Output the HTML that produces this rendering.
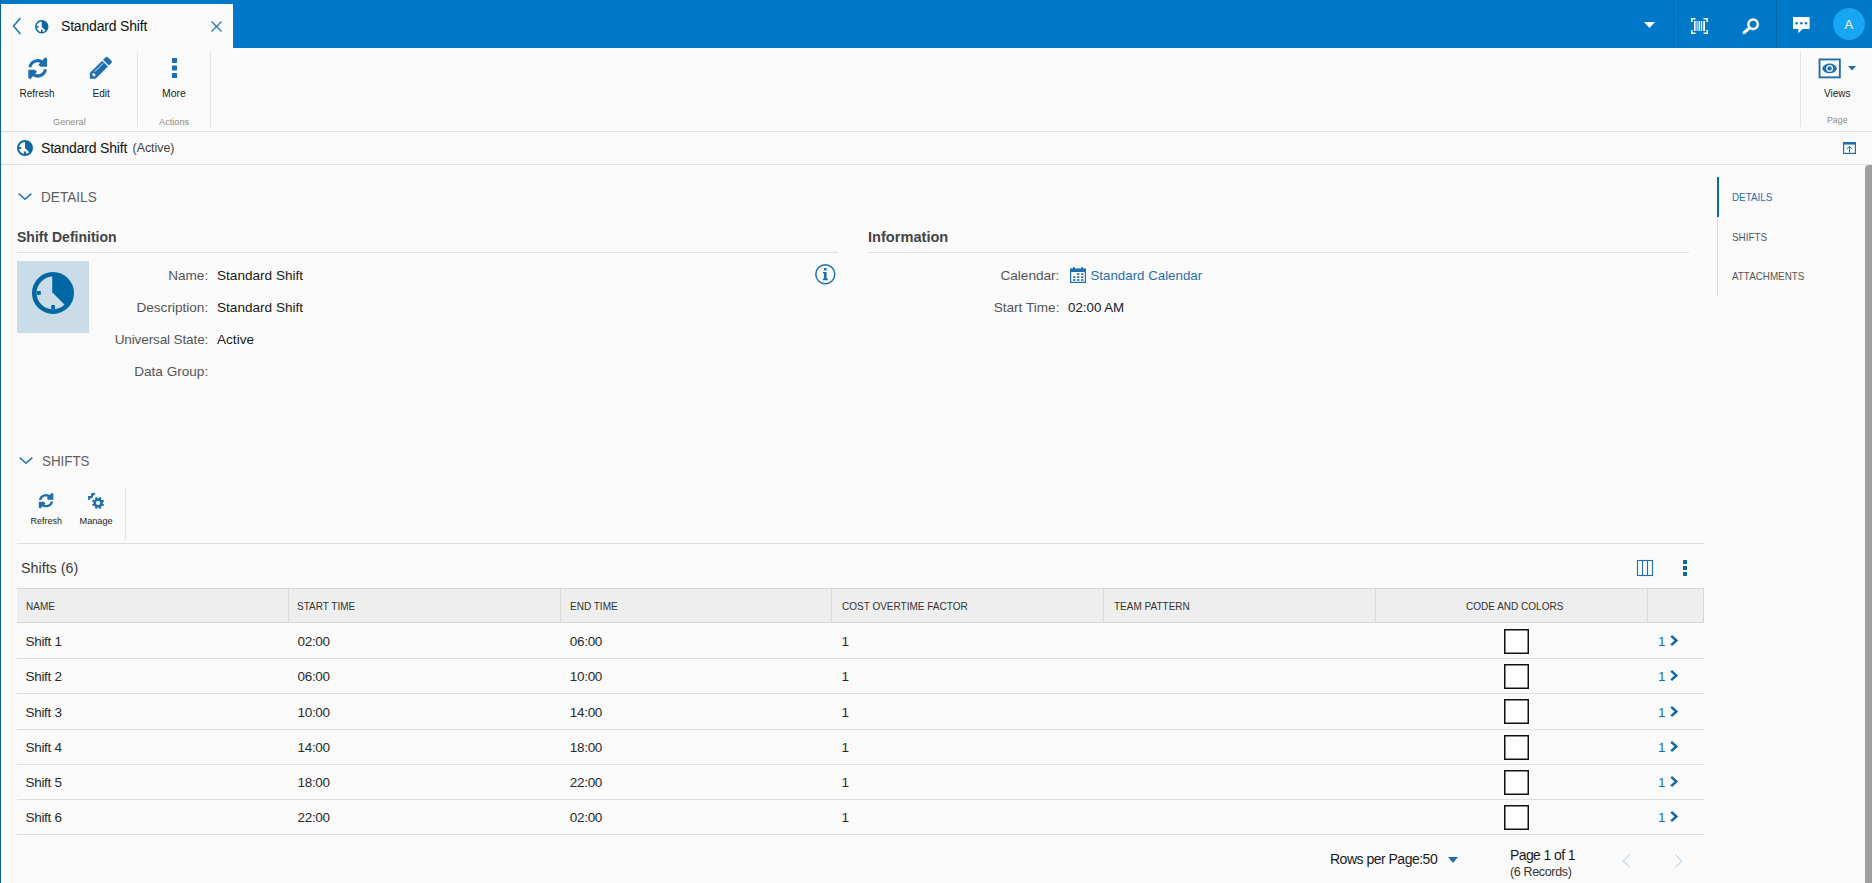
<!DOCTYPE html>
<html><head><meta charset="utf-8">
<style>
*{margin:0;padding:0;box-sizing:border-box}
html,body{width:1872px;height:883px;overflow:hidden;background:#fafafa;font-family:"Liberation Sans",sans-serif;color:#1a1a1a}
.a{position:absolute;white-space:nowrap;line-height:1}
svg{position:absolute;overflow:visible}
#topbar{position:absolute;left:0;top:0;width:1872px;height:48px;background:#0078c8}
#leftline{position:absolute;left:0;top:0;width:1px;height:883px;background:#0461a2}
#wline{position:absolute;left:1px;top:48px;width:1px;height:835px;background:#fff}
#tab{position:absolute;left:1px;top:4px;width:232px;height:44px;background:#fafafa}
.sep{position:absolute;width:1px;background:#e3e3e3}
.hl{position:absolute;height:1px;background:#dedede}
.tbl{color:#1a1a1a;font-size:10px}
.grp{color:#8c8c8c;font-size:9.2px}
.lbl{color:#555;font-size:13.6px}
.val{color:#1a1a1a;font-size:13.6px}
.th{font-size:11px;color:#333;transform:scaleX(0.91);transform-origin:0 0}
.td{font-size:13.5px;letter-spacing:-0.3px;color:#2a2a2a}
.nav{font-size:11.2px;color:#555;transform:scaleX(0.88);transform-origin:0 0}
.ic{fill:#1f6fae}
</style></head><body>
<div id="topbar"></div>
<div id="tab"></div>
<div id="leftline"></div>
<div id="wline"></div>

<!-- ===== top bar ===== -->
<svg style="left:12px;top:17px" width="10" height="18" viewBox="0 0 10 18"><path d="M8.5 1 L1.5 9 L8.5 17" fill="none" stroke="#1f78b8" stroke-width="1.6"/></svg>
<svg style="left:34.6px;top:19.5px" width="13.5" height="13.5" viewBox="0 0 42 42"><circle cx="21" cy="21" r="18.5" fill="none" stroke="#0d67a6" stroke-width="5"/><path d="M21 21 L21 2.5 A18.5 18.5 0 0 1 34.1 34.1 Z" fill="#0d67a6"/><rect x="4" y="18.5" width="7" height="5" fill="#0d67a6"/><rect x="18.5" y="30" width="5" height="8" fill="#0d67a6"/></svg>
<div class="a" style="left:61px;top:19px;font-size:14px;letter-spacing:-0.18px;color:#111">Standard Shift</div>
<svg style="left:211px;top:20.5px" width="11" height="11" viewBox="0 0 11 11"><path d="M0.5 0.5 L10.5 10.5 M10.5 0.5 L0.5 10.5" stroke="#1f78b8" stroke-width="1.3"/></svg>

<svg style="left:1644px;top:22px" width="11" height="6" viewBox="0 0 11 6"><path d="M0 0 H11 L5.5 6 Z" fill="#fff"/></svg>
<div style="position:absolute;left:1673px;top:0;width:1px;height:48px;background:#0a66aa"></div>
<div style="position:absolute;left:1776px;top:0;width:1px;height:48px;background:#0a66aa"></div>
<!-- barcode -->
<svg style="left:1691px;top:18px" width="17" height="16" viewBox="0 0 17 16"><path d="M0.8 4 V0.8 H4.5 M12.5 0.8 H16.2 V4 M16.2 12 V15.2 H12.5 M4.5 15.2 H0.8 V12" fill="none" stroke="#fff" stroke-width="1.6"/><rect x="3" y="3" width="1.6" height="10" fill="#fff"/><rect x="5.6" y="3" width="1" height="10" fill="#fff"/><rect x="7.6" y="3" width="1.6" height="10" fill="#fff"/><rect x="10.2" y="3" width="1" height="10" fill="#fff"/><rect x="12.2" y="3" width="1.8" height="10" fill="#fff"/></svg>
<!-- search -->
<svg style="left:1742px;top:18px" width="18" height="17" viewBox="0 0 18 17"><circle cx="11.1" cy="6.3" r="4.7" fill="none" stroke="#fff" stroke-width="2.5"/><path d="M7.6 9.9 L2.1 14.6" stroke="#fff" stroke-width="3.2" stroke-linecap="round"/></svg>
<!-- chat -->
<svg style="left:1793px;top:17px" width="17" height="17" viewBox="0 0 17 17"><path d="M0 0 H16.6 V12 H9.5 L5.2 16.2 L5.4 12 H0 Z" fill="#fff"/><circle cx="3.6" cy="6.2" r="1.25" fill="#0078c8"/><circle cx="8.3" cy="6.2" r="1.25" fill="#0078c8"/><circle cx="13" cy="6.2" r="1.25" fill="#0078c8"/></svg>
<div style="position:absolute;left:1833px;top:8px;width:32px;height:32px;border-radius:50%;background:#16a6f4"></div>
<div class="a" style="left:1844.5px;top:17.8px;font-size:13px;color:#fff">A</div>

<!-- ===== toolbar ===== -->
<div class="hl" style="left:1px;top:131px;width:1871px"></div>
<!-- refresh icon -->
<svg style="left:27.5px;top:56.5px" width="19.5" height="22.6" viewBox="3.5 2.5 19.5 22.6" preserveAspectRatio="none"><g fill="#1f6fae"><path d="M4.0 12.8 A9.2 9.2 0 0 1 19.2 6.8 L17.6 9.8 A6.2 6.2 0 0 0 7.0 12.8 Z M20.6 2.8 L22.6 4.0 L22.6 12.3 L15.9 12.3 L14.0 10.3 Z"/><path d="M4.0 12.8 A9.2 9.2 0 0 1 19.2 6.8 L17.6 9.8 A6.2 6.2 0 0 0 7.0 12.8 Z M20.6 2.8 L22.6 4.0 L22.6 12.3 L15.9 12.3 L14.0 10.3 Z" transform="rotate(180 13.2 13.8)"/></g></svg>
<!-- edit icon -->
<svg style="left:86px;top:54px" width="30" height="28" viewBox="0 0 30 28"><g transform="translate(3.8 24.8) rotate(-45)"><path d="M0 0 L4.1 -4.1 L21.6 -4.1 L21.6 4.1 L4.1 4.1 Z" fill="#1f6fae"/><path d="M22.8 -4.1 H26.5 Q28 -4.1 28 -2.6 V2.6 Q28 4.1 26.5 4.1 H22.8 Z" fill="#1f6fae"/><path d="M8.3 -1.6 H20.4" stroke="#fafafa" stroke-width="0.8"/><rect x="4.6" y="-1.6" width="2.2" height="3.2" fill="#fafafa"/></g></svg>
<div class="a tbl" style="left:19.5px;top:88.5px">Refresh</div>
<div class="a tbl" style="left:92.5px;top:88.5px">Edit</div>
<!-- more -->
<svg style="left:171.5px;top:58px" width="5" height="20" viewBox="0 0 5 20"><rect x="0" y="0" width="5" height="5" fill="#1f6fae"/><rect x="0" y="7.5" width="5" height="5" fill="#1f6fae"/><rect x="0" y="15" width="5" height="5" fill="#1f6fae"/></svg>
<div class="a tbl" style="left:162px;top:88px;font-size:10.5px">More</div>
<div class="a grp" style="left:53px;top:118px">General</div>
<div class="a grp" style="left:159px;top:118px">Actions</div>
<div class="sep" style="left:137px;top:52px;height:75px"></div>
<div class="sep" style="left:210px;top:52px;height:75px"></div>
<div class="sep" style="left:1800px;top:52px;height:75px"></div>
<!-- views icon -->
<svg style="left:1818px;top:57.5px" width="24" height="21" viewBox="0 0 24 21"><rect x="1.55" y="1.45" width="20.3" height="17.9" fill="none" stroke="#1f6fae" stroke-width="1.9"/><path d="M4.2 10.4 C6.2 3.9 17 3.9 19 10.4 C17 16.9 6.2 16.9 4.2 10.4 Z" fill="#1f6fae"/><circle cx="11.6" cy="10.4" r="3.4" fill="#fafafa"/><circle cx="11.6" cy="10.4" r="2.2" fill="#1f6fae"/></svg>
<svg style="left:1847.5px;top:65.5px" width="8" height="4.5" viewBox="0 0 8 4.5"><path d="M0 0 H8 L4 4.5 Z" fill="#1f6fae"/></svg>
<div class="a tbl" style="left:1824px;top:88.5px">Views</div>
<div class="a grp" style="left:1827px;top:116px;font-size:8.8px">Page</div>

<!-- ===== title ===== -->
<svg style="left:17px;top:140px" width="16" height="16" viewBox="0 0 42 42"><circle cx="21" cy="21" r="18.5" fill="none" stroke="#0d67a6" stroke-width="5"/><path d="M21 21 L21 2.5 A18.5 18.5 0 0 1 34.1 34.1 Z" fill="#0d67a6"/><rect x="4" y="18.5" width="7" height="5" fill="#0d67a6"/><rect x="18.5" y="30" width="5" height="8" fill="#0d67a6"/></svg>
<div class="a" style="left:41px;top:141px;font-size:14px;letter-spacing:-0.18px;color:#111">Standard Shift</div>
<div class="a" style="left:132.5px;top:141.5px;font-size:12.4px;color:#444">(Active)</div>
<div class="hl" style="left:1px;top:164px;width:1871px"></div>
<svg style="left:1842.5px;top:142px" width="13" height="12" viewBox="0 0 13 12"><rect x="0.6" y="0.6" width="11.8" height="10.8" fill="#fff" stroke="#1f6fae" stroke-width="1.2"/><rect x="0" y="0" width="13" height="2.6" fill="#1f6fae"/><path d="M6.5 10.5 V4.5 M3.6 7.2 L6.5 4.5 L9.4 7.2" fill="none" stroke="#1f6fae" stroke-width="1"/></svg>

<!-- scrollbar -->
<div style="position:absolute;left:1865px;top:165px;width:7px;height:718px;background:#9e9e9e;border-radius:4px 0 0 0"></div>

<!-- ===== details ===== -->
<svg style="left:18px;top:192.5px" width="14" height="7" viewBox="0 0 14 7"><path d="M0.7 0.7 L7 6.3 L13.3 0.7" fill="none" stroke="#1f78b8" stroke-width="1.6"/></svg>
<div class="a" style="left:40.8px;top:188.9px;font-size:15.5px;color:#5f5f5f;transform:scaleX(0.878);transform-origin:0 0">DETAILS</div>
<div class="a" style="left:17px;top:230px;font-size:14px;font-weight:bold;color:#444">Shift Definition</div>
<div class="hl" style="left:17px;top:252px;width:821px"></div>
<div class="a" style="left:868px;top:230px;font-size:14.6px;font-weight:bold;color:#444">Information</div>
<div class="hl" style="left:868px;top:252px;width:821px"></div>

<div style="position:absolute;left:17px;top:261px;width:72px;height:72px;background:#c9dce8"></div>
<svg style="left:32px;top:272px" width="42" height="42" viewBox="0 0 42 42"><circle cx="21" cy="21" r="18.7" fill="none" stroke="#0067a5" stroke-width="4.6"/><path d="M21 21 L21 2.3 A18.7 18.7 0 0 1 34.2 34.2 Z" fill="#0067a5"/><path d="M21 21 L21 3" stroke="#0067a5" stroke-width="1.5"/><rect x="5" y="19" width="3.8" height="3.8" fill="#0067a5"/><rect x="19.3" y="33" width="3.6" height="4.5" fill="#0067a5"/></svg>

<div class="a lbl" style="right:1663.8px;top:268.5px">Name:</div>
<div class="a val" style="left:217px;top:268.5px">Standard Shift</div>
<div class="a lbl" style="right:1663.8px;top:300.5px">Description:</div>
<div class="a val" style="left:217px;top:300.5px">Standard Shift</div>
<div class="a lbl" style="right:1663.8px;top:332.5px;letter-spacing:-0.15px">Universal State:</div>
<div class="a val" style="left:217px;top:332.5px">Active</div>
<div class="a lbl" style="right:1663.8px;top:364.5px">Data Group:</div>

<svg style="left:814.5px;top:263.5px" width="21" height="21" viewBox="0 0 21 21"><circle cx="10.3" cy="10.3" r="9.5" fill="none" stroke="#1f6fae" stroke-width="1.5"/><rect x="9" y="4" width="2.6" height="2.4" fill="#1f6fae"/><path d="M8 8 H11.6 V14.6 H12.8 V16.2 H7.8 V14.6 H9 V9.6 H8 Z" fill="#1f6fae"/></svg>

<div class="a lbl" style="right:812.6px;top:268.5px">Calendar:</div>
<svg style="left:1070px;top:267px" width="16" height="16" viewBox="0 0 16 16"><rect x="0.6" y="2" width="14.8" height="13.4" fill="none" stroke="#1f6fae" stroke-width="1.2"/><rect x="0" y="2" width="16" height="3" fill="#1f6fae"/><rect x="3" y="0" width="1.6" height="2.5" fill="#1f6fae"/><rect x="11.2" y="0" width="1.6" height="2.5" fill="#1f6fae"/><g fill="#1f6fae"><rect x="7" y="6.3" width="2.4" height="1.6"/><rect x="11" y="6.3" width="2.4" height="1.6"/><rect x="3" y="9.3" width="2.4" height="1.6"/><rect x="7" y="9.3" width="2.4" height="1.6"/><rect x="11" y="9.3" width="2.4" height="1.6"/><rect x="3" y="12.2" width="2.4" height="1.6"/><rect x="7" y="12.2" width="2.4" height="1.6"/><rect x="11" y="12.2" width="2.4" height="1.6"/></g></svg>
<div class="a val" style="left:1090.5px;top:268.5px;color:#1f6fae;font-size:13.3px">Standard Calendar</div>
<div class="a lbl" style="right:812.6px;top:300.5px">Start Time:</div>
<div class="a val" style="left:1068px;top:300.5px;font-size:13.3px">02:00 AM</div>

<!-- right nav -->
<div style="position:absolute;left:1717px;top:177px;width:1px;height:120px;background:#dcdcdc"></div>
<div style="position:absolute;left:1716.5px;top:177px;width:2.5px;height:40px;background:#0d67a6"></div>
<div class="a nav" style="left:1731.5px;top:191.6px;color:#1f6fae">DETAILS</div>
<div class="a nav" style="left:1731.5px;top:231.6px">SHIFTS</div>
<div class="a nav" style="left:1731.5px;top:271.4px">ATTACHMENTS</div>

<!-- ===== shifts ===== -->
<svg style="left:18.5px;top:456.5px" width="14" height="7" viewBox="0 0 14 7"><path d="M0.7 0.7 L7 6.3 L13.3 0.7" fill="none" stroke="#1f78b8" stroke-width="1.6"/></svg>
<div class="a" style="left:41.5px;top:453px;font-size:15.4px;color:#5f5f5f;transform:scaleX(0.868);transform-origin:0 0">SHIFTS</div>

<svg style="left:38.9px;top:493px" width="14.4" height="15.4" viewBox="4 3 18.7 21.6" preserveAspectRatio="none"><g fill="#1f6fae"><path d="M4.0 12.8 A9.2 9.2 0 0 1 19.2 6.8 L17.6 9.8 A6.2 6.2 0 0 0 7.0 12.8 Z M20.6 2.8 L22.6 4.0 L22.6 12.3 L15.9 12.3 L14.0 10.3 Z"/><path d="M4.0 12.8 A9.2 9.2 0 0 1 19.2 6.8 L17.6 9.8 A6.2 6.2 0 0 0 7.0 12.8 Z M20.6 2.8 L22.6 4.0 L22.6 12.3 L15.9 12.3 L14.0 10.3 Z" transform="rotate(180 13.2 13.8)"/></g></svg>
<svg style="left:84px;top:489px" width="24" height="24" viewBox="0 0 24 24"><g transform="translate(14.1 13.9)" fill="#1f6fae"><circle r="4.6"/><rect x="-1.15" y="-6" width="2.3" height="12" transform="rotate(22.5)"/><rect x="-1.15" y="-6" width="2.3" height="12" transform="rotate(67.5)"/><rect x="-1.15" y="-6" width="2.3" height="12" transform="rotate(112.5)"/><rect x="-1.15" y="-6" width="2.3" height="12" transform="rotate(157.5)"/></g><circle cx="14.1" cy="13.9" r="2.1" fill="#fafafa"/><path d="M4.9 11 V7.9 H8 V4.9 H11.1" fill="none" stroke="#1f6fae" stroke-width="1.7"/><path d="M5.6 9.6 L9.6 5.6" stroke="#1f6fae" stroke-width="1.4"/></svg>
<div class="a tbl" style="left:30.5px;top:516.5px;font-size:9px">Refresh</div>
<div class="a tbl" style="left:79.5px;top:516.5px;font-size:9.2px">Manage</div>
<div class="sep" style="left:125px;top:489px;height:50px"></div>
<div class="hl" style="left:17px;top:543px;width:1687px"></div>

<div class="a" style="left:21px;top:560.6px;font-size:14.3px;color:#3a3a3a">Shifts (6)</div>
<svg style="left:1637px;top:560px" width="16" height="16" viewBox="0 0 16 16"><rect x="0.5" y="0.5" width="15" height="15" fill="none" stroke="#1f6fae" stroke-width="1.1"/><path d="M5.5 0.5 V15.5 M10.5 0.5 V15.5" stroke="#1f6fae" stroke-width="1.1"/></svg>
<svg style="left:1683px;top:560px" width="4" height="16" viewBox="0 0 4 16"><rect x="0" y="0" width="4" height="4" fill="#0d67a6"/><rect x="0" y="6" width="4" height="4" fill="#0d67a6"/><rect x="0" y="12" width="4" height="4" fill="#0d67a6"/></svg>

<!-- table -->
<!--TBL-->
<div style="position:absolute;left:17px;top:588px;width:1687px;height:35px;background:#eeeeee;border-top:1px solid #d6d6d6;border-bottom:1px solid #d6d6d6;border-right:1px solid #d6d6d6"></div>
<div style="position:absolute;left:288px;top:589px;width:1px;height:33px;background:#d9d9d9"></div>
<div style="position:absolute;left:560px;top:589px;width:1px;height:33px;background:#d9d9d9"></div>
<div style="position:absolute;left:831px;top:589px;width:1px;height:33px;background:#d9d9d9"></div>
<div style="position:absolute;left:1103px;top:589px;width:1px;height:33px;background:#d9d9d9"></div>
<div style="position:absolute;left:1375px;top:589px;width:1px;height:33px;background:#d9d9d9"></div>
<div style="position:absolute;left:1647px;top:589px;width:1px;height:33px;background:#d9d9d9"></div>
<div class="a th" style="left:25.6px;top:600.6px">NAME</div>
<div class="a th" style="left:297.4px;top:600.6px">START TIME</div>
<div class="a th" style="left:570px;top:600.6px">END TIME</div>
<div class="a th" style="left:841.7px;top:600.6px">COST OVERTIME FACTOR</div>
<div class="a th" style="left:1113.5px;top:600.6px">TEAM PATTERN</div>
<div class="a th" style="left:1466px;top:600.6px">CODE AND COLORS</div>
<div class="hl" style="left:17px;top:658px;width:1687px"></div>
<div class="a td" style="left:25.5px;top:635.0px">Shift 1</div>
<div class="a td" style="left:297.5px;top:635.0px">02:00</div>
<div class="a td" style="left:569.8px;top:635.0px">06:00</div>
<div class="a td" style="left:841.5px;top:635.0px">1</div>
<svg style="left:1504px;top:628.9px" width="25" height="25" viewBox="0 0 25 25"><rect x="0.75" y="0.75" width="23.5" height="23.5" fill="#fff" stroke="#111" stroke-width="1.5"/></svg>
<div class="a td" style="left:1658px;top:635.0px;color:#1f6fae">1</div>
<svg style="left:1669.5px;top:635.0px" width="8" height="11" viewBox="0 0 8 11"><path d="M1.2 0.8 L6.4 5.5 L1.2 10.2" fill="none" stroke="#0d67a6" stroke-width="2.4"/></svg>
<div class="hl" style="left:17px;top:693px;width:1687px"></div>
<div class="a td" style="left:25.5px;top:670.0px">Shift 2</div>
<div class="a td" style="left:297.5px;top:670.0px">06:00</div>
<div class="a td" style="left:569.8px;top:670.0px">10:00</div>
<div class="a td" style="left:841.5px;top:670.0px">1</div>
<svg style="left:1504px;top:663.9px" width="25" height="25" viewBox="0 0 25 25"><rect x="0.75" y="0.75" width="23.5" height="23.5" fill="#fff" stroke="#111" stroke-width="1.5"/></svg>
<div class="a td" style="left:1658px;top:670.0px;color:#1f6fae">1</div>
<svg style="left:1669.5px;top:670.0px" width="8" height="11" viewBox="0 0 8 11"><path d="M1.2 0.8 L6.4 5.5 L1.2 10.2" fill="none" stroke="#0d67a6" stroke-width="2.4"/></svg>
<div class="hl" style="left:17px;top:729px;width:1687px"></div>
<div class="a td" style="left:25.5px;top:705.5px">Shift 3</div>
<div class="a td" style="left:297.5px;top:705.5px">10:00</div>
<div class="a td" style="left:569.8px;top:705.5px">14:00</div>
<div class="a td" style="left:841.5px;top:705.5px">1</div>
<svg style="left:1504px;top:699.4px" width="25" height="25" viewBox="0 0 25 25"><rect x="0.75" y="0.75" width="23.5" height="23.5" fill="#fff" stroke="#111" stroke-width="1.5"/></svg>
<div class="a td" style="left:1658px;top:705.5px;color:#1f6fae">1</div>
<svg style="left:1669.5px;top:705.5px" width="8" height="11" viewBox="0 0 8 11"><path d="M1.2 0.8 L6.4 5.5 L1.2 10.2" fill="none" stroke="#0d67a6" stroke-width="2.4"/></svg>
<div class="hl" style="left:17px;top:764px;width:1687px"></div>
<div class="a td" style="left:25.5px;top:741.0px">Shift 4</div>
<div class="a td" style="left:297.5px;top:741.0px">14:00</div>
<div class="a td" style="left:569.8px;top:741.0px">18:00</div>
<div class="a td" style="left:841.5px;top:741.0px">1</div>
<svg style="left:1504px;top:734.9px" width="25" height="25" viewBox="0 0 25 25"><rect x="0.75" y="0.75" width="23.5" height="23.5" fill="#fff" stroke="#111" stroke-width="1.5"/></svg>
<div class="a td" style="left:1658px;top:741.0px;color:#1f6fae">1</div>
<svg style="left:1669.5px;top:741.0px" width="8" height="11" viewBox="0 0 8 11"><path d="M1.2 0.8 L6.4 5.5 L1.2 10.2" fill="none" stroke="#0d67a6" stroke-width="2.4"/></svg>
<div class="hl" style="left:17px;top:799px;width:1687px"></div>
<div class="a td" style="left:25.5px;top:776.0px">Shift 5</div>
<div class="a td" style="left:297.5px;top:776.0px">18:00</div>
<div class="a td" style="left:569.8px;top:776.0px">22:00</div>
<div class="a td" style="left:841.5px;top:776.0px">1</div>
<svg style="left:1504px;top:769.9px" width="25" height="25" viewBox="0 0 25 25"><rect x="0.75" y="0.75" width="23.5" height="23.5" fill="#fff" stroke="#111" stroke-width="1.5"/></svg>
<div class="a td" style="left:1658px;top:776.0px;color:#1f6fae">1</div>
<svg style="left:1669.5px;top:776.0px" width="8" height="11" viewBox="0 0 8 11"><path d="M1.2 0.8 L6.4 5.5 L1.2 10.2" fill="none" stroke="#0d67a6" stroke-width="2.4"/></svg>
<div class="hl" style="left:17px;top:834px;width:1687px"></div>
<div class="a td" style="left:25.5px;top:811.0px">Shift 6</div>
<div class="a td" style="left:297.5px;top:811.0px">22:00</div>
<div class="a td" style="left:569.8px;top:811.0px">02:00</div>
<div class="a td" style="left:841.5px;top:811.0px">1</div>
<svg style="left:1504px;top:804.9px" width="25" height="25" viewBox="0 0 25 25"><rect x="0.75" y="0.75" width="23.5" height="23.5" fill="#fff" stroke="#111" stroke-width="1.5"/></svg>
<div class="a td" style="left:1658px;top:811.0px;color:#1f6fae">1</div>
<svg style="left:1669.5px;top:811.0px" width="8" height="11" viewBox="0 0 8 11"><path d="M1.2 0.8 L6.4 5.5 L1.2 10.2" fill="none" stroke="#0d67a6" stroke-width="2.4"/></svg>
<!--/TBL-->

<!-- footer -->
<div class="a" style="left:1330px;top:852px;font-size:14px;letter-spacing:-0.5px;color:#1a1a1a">Rows per Page:50</div>
<svg style="left:1448px;top:856.5px" width="10" height="6" viewBox="0 0 10 6"><path d="M0 0 H10 L5 6 Z" fill="#1f6fae"/></svg>
<div class="a" style="left:1510px;top:847.5px;font-size:14px;letter-spacing:-0.6px;color:#1a1a1a">Page 1 of 1</div>
<div class="a" style="left:1510px;top:866px;font-size:12.5px;letter-spacing:-0.35px;color:#333">(6 Records)</div>
<svg style="left:1621.5px;top:854px" width="9" height="14" viewBox="0 0 9 14"><path d="M7.8 0.6 L1.2 7 L7.8 13.4" fill="none" stroke="#c5ddef" stroke-width="1.3"/></svg>
<svg style="left:1673.5px;top:854px" width="9" height="14" viewBox="0 0 9 14"><path d="M1.2 0.6 L7.8 7 L1.2 13.4" fill="none" stroke="#c5ddef" stroke-width="1.3"/></svg>

</body></html>
